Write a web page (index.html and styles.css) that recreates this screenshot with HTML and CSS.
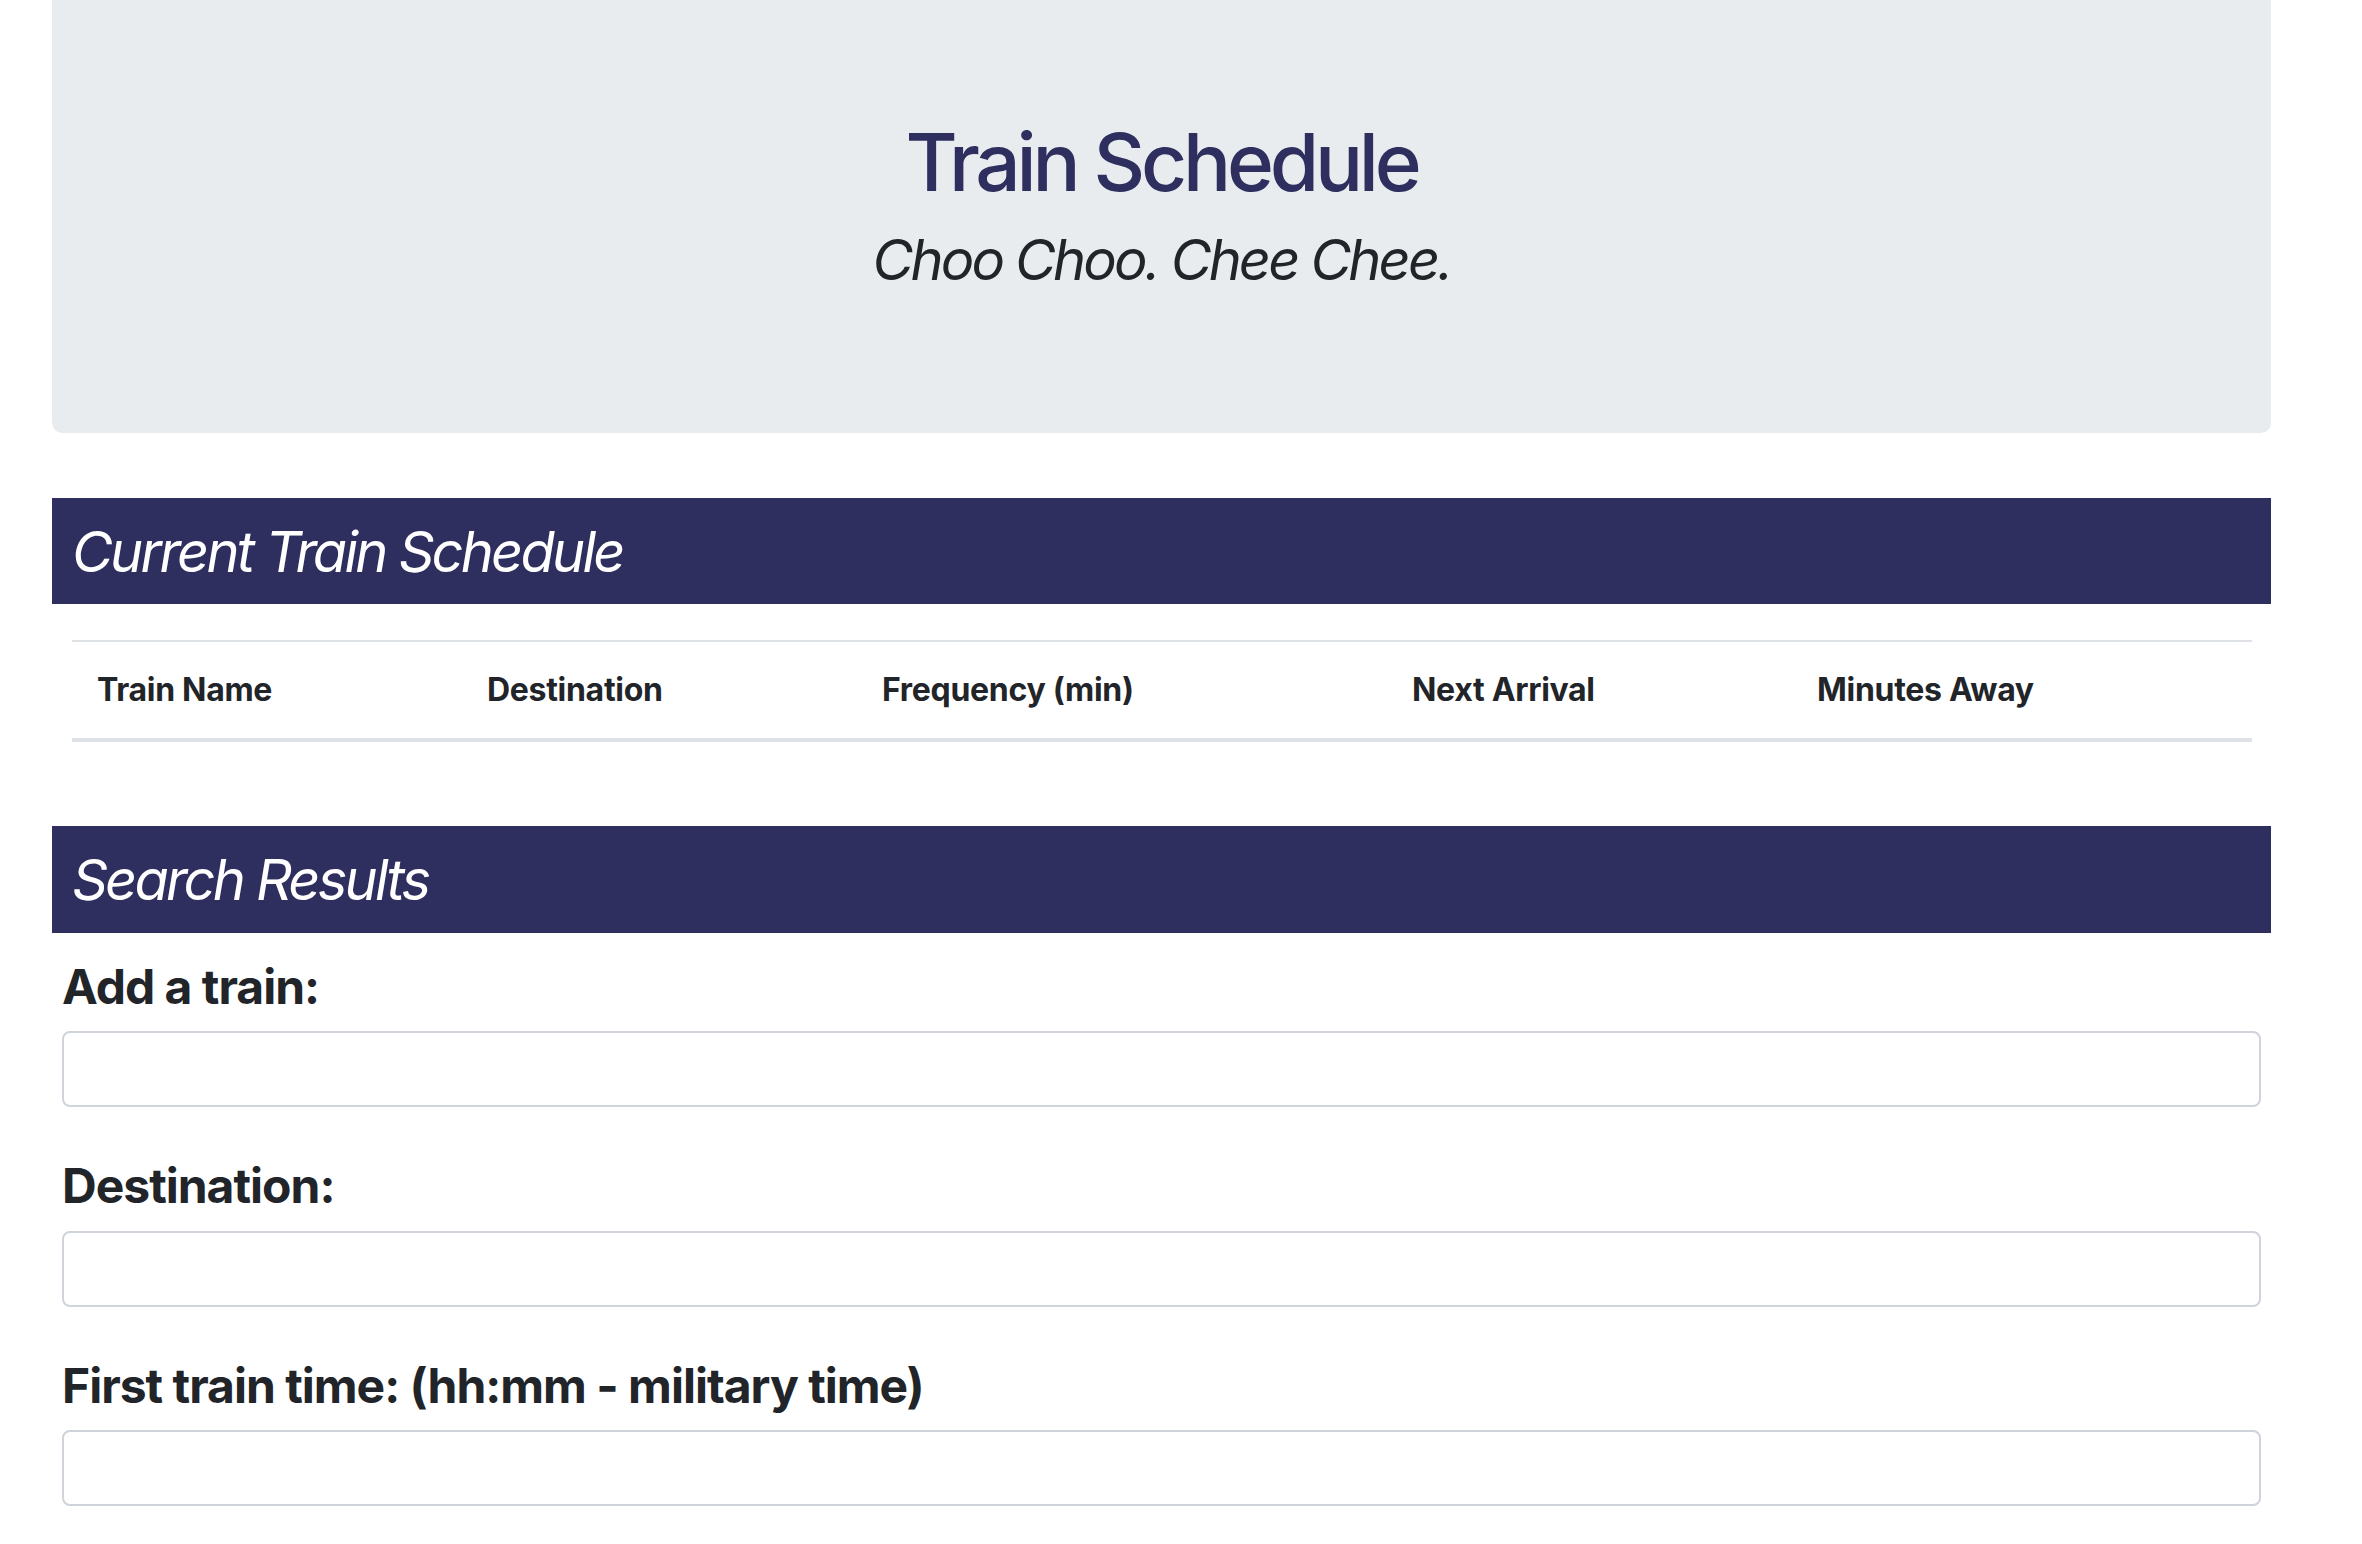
FILE: index.html
```html
<!DOCTYPE html>
<html lang="en">
<head>
<meta charset="utf-8">
<title>Train Schedule</title>
<link rel="stylesheet" href="styles.css">
</head>
<body>
<div class="container">
  <header class="jumbotron">
    <h1 class="title">Train Schedule</h1>
    <p class="subtitle">Choo Choo. Chee Chee.</p>
  </header>

  <section class="panel">
    <h2 class="panel-heading">Current Train Schedule</h2>
    <table class="schedule">
      <colgroup>
        <col class="c-name">
        <col class="c-dest">
        <col class="c-freq">
        <col class="c-next">
        <col class="c-away">
      </colgroup>
      <thead>
        <tr>
          <th>Train Name</th>
          <th>Destination</th>
          <th>Frequency (min)</th>
          <th>Next Arrival</th>
          <th>Minutes Away</th>
        </tr>
      </thead>
      <tbody></tbody>
    </table>
  </section>

  <section class="panel panel-search">
    <h2 class="panel-heading">Search Results</h2>
    <form class="train-form">
      <div class="form-group">
        <label class="form-label" for="train-name">Add a train:</label>
        <input class="form-control" id="train-name" type="text">
      </div>
      <div class="form-group">
        <label class="form-label" for="destination">Destination:</label>
        <input class="form-control" id="destination" type="text">
      </div>
      <div class="form-group">
        <label class="form-label" for="first-time">First train time: (hh:mm - military time)</label>
        <input class="form-control" id="first-time" type="text">
      </div>
    </form>
  </section>
</div>
</body>
</html>
```

FILE: styles.css
```css
* {
  box-sizing: border-box;
}

html, body {
  margin: 0;
  padding: 0;
  background: #ffffff;
}

body {
  font-family: Inter, "Noto Sans", "Liberation Sans", sans-serif;
  color: #212529;
  overflow: hidden;
}

.container {
  margin-left: 52px;
  width: 2219px;
}

.jumbotron {
  background: #e9ecef;
  border-radius: 0 0 10px 10px;
  padding: 114px 32px 139px;
  text-align: center;
}

.title {
  margin: 0;
  font-size: 80px;
  line-height: 96px;
  font-weight: 500;
  letter-spacing: -4.2px;
  color: #2e2f5f;
}

.subtitle {
  margin: 17px 0 0;
  font-size: 56px;
  line-height: 67.2px;
  font-style: italic;
  font-weight: 400;
  letter-spacing: -2.9px;
  color: #212529;
}

.panel {
  margin-top: 65px;
}

.panel-search {
  margin-top: 84px;
}

.panel-heading {
  margin: 0;
  background: #2e2f5f;
  color: #ffffff;
  font-size: 56px;
  line-height: 67.2px;
  font-style: italic;
  font-weight: 400;
  letter-spacing: -2.8px;
  padding: 21px 20px 18px;
}

.schedule {
  margin: 36px 20px 0;
  width: 2180px;
  border-collapse: collapse;
  table-layout: fixed;
}

.c-name { width: 390px; }
.c-dest { width: 395px; }
.c-freq { width: 530px; }
.c-next { width: 405px; }
.c-away { width: 460px; }

.schedule th {
  text-align: left;
  font-size: 32px;
  line-height: 48px;
  font-weight: 700;
  letter-spacing: -0.3px;
  color: #212529;
  padding: 24px 24px 24px 25px;
  border-top: 2px solid #dee2e6;
  border-bottom: 4px solid #dee2e6;
}

.train-form {
  padding: 25px 10px 0;
}

.form-group {
  margin-bottom: 50px;
}

.form-label {
  display: block;
  font-size: 48px;
  line-height: 57.6px;
  font-weight: 700;
  letter-spacing: -1px;
  color: #212529;
  margin-bottom: 16px;
}

.form-control {
  display: block;
  width: 100%;
  height: 76px;
  border: 2px solid #ced4da;
  border-radius: 8px;
  background: #ffffff;
  padding: 12px 24px;
  font-size: 32px;
  font-family: inherit;
}
```
